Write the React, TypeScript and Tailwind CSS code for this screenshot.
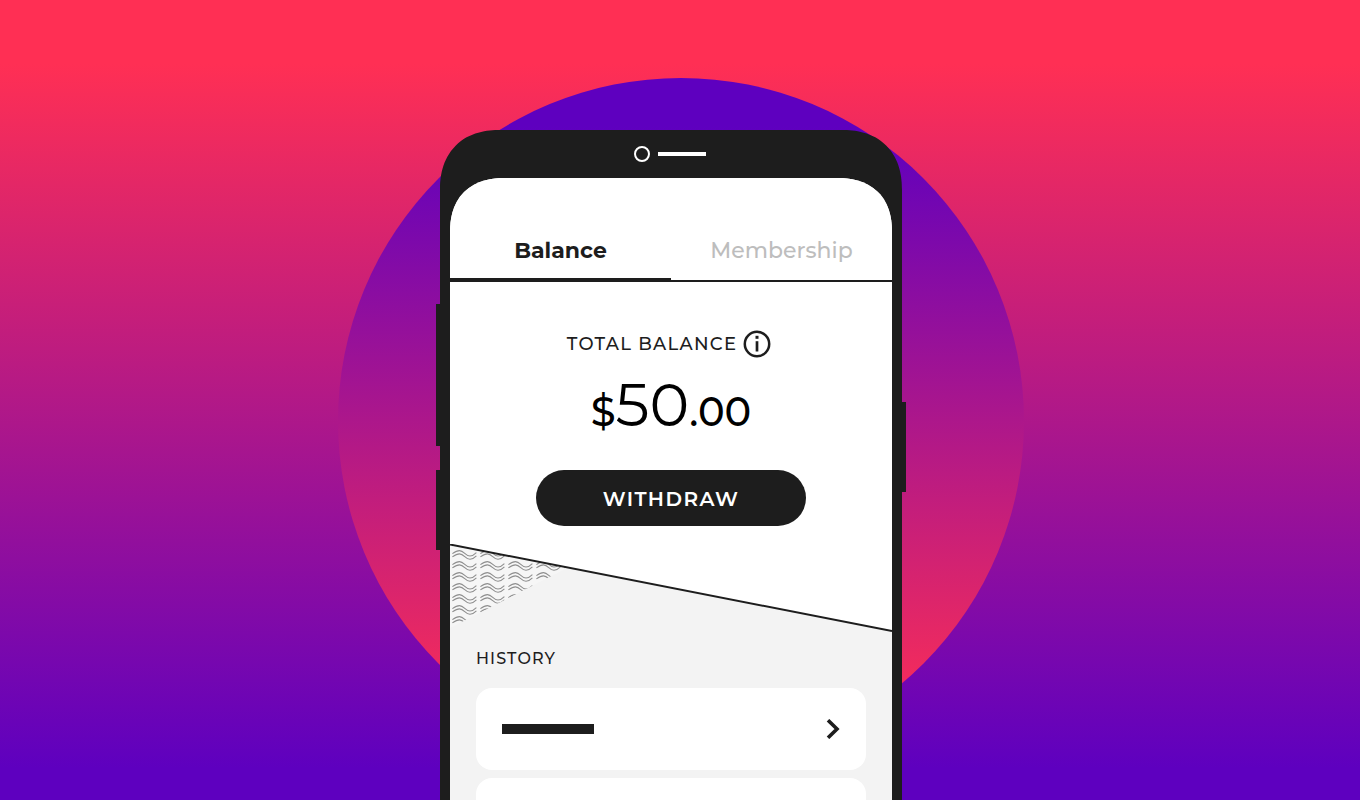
import { useState } from "react";

const tabs = ["Balance", "Membership"];
const history = [1, 2, 3];

function InfoIcon() {
  return (
    <svg viewBox="0 0 28 28" className="h-7 w-7" fill="none" aria-hidden="true">
      <circle cx="14" cy="14" r="12.2" stroke="#1d1d1d" strokeWidth="2.5" />
      <path d="M14 11.2v10.3" stroke="#1d1d1d" strokeWidth="2.7" />
      <path d="M14 5.8v3" stroke="#1d1d1d" strokeWidth="3" />
    </svg>
  );
}

function Chevron() {
  return (
    <svg viewBox="0 0 14 20" className="h-5 w-3.5" fill="none" aria-hidden="true">
      <path d="M2 1.2l9 8.8-9 8.8" stroke="#1d1d1d" strokeWidth="3.6" />
    </svg>
  );
}

function Slope() {
  return (
    <svg viewBox="0 0 442 88" className="block w-full bg-white" aria-hidden="true">
      <defs>
        <pattern id="waves" x="2" y="5" width="28" height="11" patternUnits="userSpaceOnUse">
          <path
            d="M.4 4.6C3.5 2.4 5.2 1.6 7.5 1.6C12 1.6 13.5 7 18 7C20.5 7 22.2 5.8 24.4 3.6M.4 7.9C3.5 5.7 5.2 4.9 7.5 4.9C12 4.9 13.5 10.3 18 10.3C20.5 10.3 22.2 9.1 24.4 6.9"
            fill="none"
            stroke="#8e8e8e"
            strokeWidth="1.1"
          />
        </pattern>
      </defs>
      <path d="M0 .5L442 87V88H0Z" fill="#f3f3f3" />
      <path d="M0 .5L118 23.500L0 84Z" fill="#f6f6f6" />
      <path d="M0 .5L118 23.500L0 84Z" fill="url(#waves)" />
      <path d="M0 .5L442 87" stroke="#1d1d1d" strokeWidth="2" />
    </svg>
  );
}

export default function App() {
  const [active, setActive] = useState("Balance");

  return (
    <div className="grid h-screen items-start justify-items-center overflow-hidden bg-[linear-gradient(to_bottom,#ff2f54_8%,#5e00bf_96%)] font-['Montserrat','Inter',sans-serif] text-[#1d1d1d]">
      {/* Circle behind the phone */}
      <div className="col-start-1 row-start-1 mt-[78px] ml-0.5 aspect-square w-full max-w-[686px] rounded-full bg-[linear-gradient(to_bottom,#5e00bf_7%,#ff2f54_95%)]" />

      {/* Phone */}
      <main className="relative col-start-1 row-start-1 mt-[130px] mr-[18px] w-full max-w-[462px] rounded-t-[60px] bg-[#1d1d1d] px-2.5 [corner-shape:superellipse(1.2)]">
        <div className="absolute top-[174px] -left-1 h-[142px] w-1 bg-[#1d1d1d]" />
        <div className="absolute top-[340px] -left-1 h-20 w-1 bg-[#1d1d1d]" />
        <div className="absolute top-[272px] -right-1 h-[90px] w-1 bg-[#1d1d1d]" />

        <div className="flex h-12 items-center justify-center gap-2 pr-0.5">
          <div className="h-4 w-4 rounded-full border-2 border-white" />
          <div className="h-1 w-12 bg-white" />
        </div>

        <div className="overflow-hidden rounded-t-[54px] bg-[#f3f3f3] [corner-shape:superellipse(1.2)]">
          <nav className="grid h-[104px] grid-cols-2 bg-white text-[22px]">
            {tabs.map((tab) => (
              <button
                key={tab}
                type="button"
                onClick={() => setActive(tab)}
                className={
                  active === tab
                    ? "border-b-4 border-[#1d1d1d] pt-11 font-bold"
                    : "border-b-2 border-[#1d1d1d] pt-[42px] font-medium text-[#bdbdbd]"
                }
              >
                {tab}
              </button>
            ))}
          </nav>

          <section className="flex flex-col items-center bg-white pt-12 pb-[18px]">
            <div className="flex items-center gap-1.5 pr-1">
              <h2 className="text-lg font-medium tracking-[0.07em]">TOTAL BALANCE</h2>
              <InfoIcon />
            </div>
            <p className="mt-[17px] text-[60px] leading-[60px] text-black">
              <span className="text-[40px] leading-none font-medium">$</span>50
              <span className="text-[40px] leading-none font-medium">.00</span>
            </p>
            <button
              type="button"
              className="mt-[35px] h-14 w-full max-w-[270px] rounded-full bg-[#1d1d1d] pt-0.5 text-xl font-semibold tracking-[0.07em] text-white"
            >
              WITHDRAW
            </button>
          </section>

          <Slope />

          <section className="px-[26px] pt-[15px]">
            <h2 className="text-base leading-6 font-medium tracking-[0.07em]">HISTORY</h2>
            <div className="mt-[17px] flex flex-col gap-2">
              {history.map((item) => (
                <button
                  key={item}
                  type="button"
                  aria-label="Open entry"
                  className="flex h-[82px] items-center justify-between rounded-2xl bg-white px-[26px]"
                >
                  <span className="h-2.5 w-[92px] bg-[#1d1d1d]" />
                  <Chevron />
                </button>
              ))}
            </div>
          </section>
        </div>
      </main>
    </div>
  );
}
